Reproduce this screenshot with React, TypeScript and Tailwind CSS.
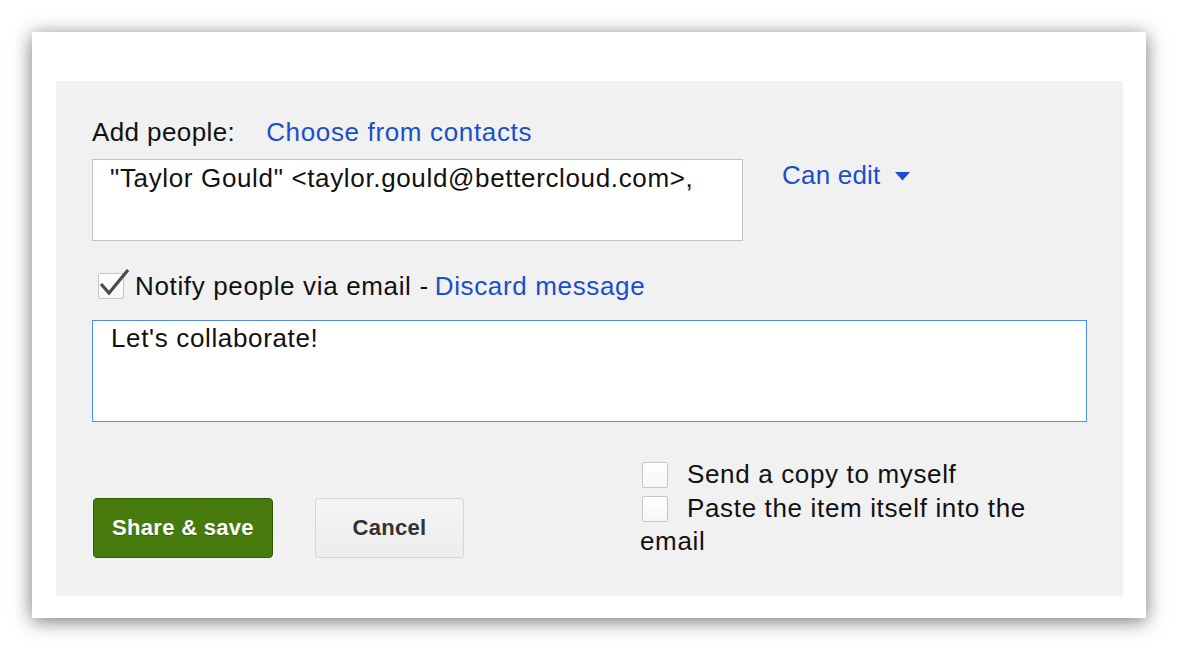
import React from "react";

function Box({ className = "" }: { className?: string }) {
  return (
    <span
      className={
        "inline-block w-[26px] h-[26px] border border-[#c6c6c6] rounded-[2px] bg-gradient-to-b from-white to-[#f6f6f6] " +
        className
      }
    />
  );
}

export default function App() {
  return (
    <div className="w-[1178px] h-[651px] bg-white pt-[32px] pl-[32px] font-['Liberation_Sans',Arial,sans-serif] text-[26px] leading-[32px] tracking-[0.65px] text-[#111]">
      <div className="w-[1114px] h-[586px] bg-white shadow-[0_3px_18px_rgba(0,0,0,0.55)] pt-[49px] pl-[24px]">
        <div className="w-[1067px] h-[515px] bg-[#f1f1f1] pl-[36px] pt-[35px]">
          <div className="flex">
            <span className="tracking-[0.4px]">Add people:</span>
            <span className="ml-[31px] text-[#1a4fcb]">Choose from contacts</span>
          </div>
          <div className="flex items-start mt-[11px]">
            <div className="w-[651px] h-[82px] bg-white border border-[#c4c4c4] pl-[17px] pt-[2px]">
              "Taylor Gould" &lt;taylor.gould@bettercloud.com&gt;,
            </div>
            <div className="ml-[39px] flex items-center text-[#1a4fcb]">
              <span className="tracking-[0.2px]">Can edit</span>
              <svg width="15" height="9" viewBox="0 0 15 9" className="ml-[15px] mt-[2px]">
                <path d="M0 0 H15 L7.5 8.5 Z" fill="#1a4fcb" />
              </svg>
            </div>
          </div>
          <div className="flex items-center mt-[29px]">
            <span className="relative ml-[6px] inline-flex">
              <Box className="w-[25px] h-[25px]" />
              <svg
                width="34"
                height="30"
                viewBox="0 0 34 30"
                className="absolute left-[0px] top-[-4px]"
              >
                <path
                  d="M3 15 L11 24 L30 1"
                  stroke="#4a4a4a"
                  strokeWidth="3.2"
                  fill="none"
                  strokeLinejoin="miter"
                />
              </svg>
            </span>
            <span className="ml-[11px]">Notify people via email - </span>
            <span className="ml-[6px] text-[#1a4fcb]">Discard message</span>
          </div>
          <div className="mt-[18px] w-[995px] h-[102px] bg-white border-[1.5px] border-[#4d8ef0] pl-[18px] pt-[1px]">
            Let's collaborate!
          </div>
          <div className="flex items-start mt-[36px]">
            <div className="flex mt-[40px] tracking-[0.3px]">
              <button className="ml-[1px] w-[180px] h-[60px] rounded-[4px] bg-[#477a0c] border border-[#335a07] text-white font-bold text-[22px] [text-shadow:0_1px_0_rgba(0,0,0,0.2)]">
                Share &amp; save
              </button>
              <button className="ml-[42px] w-[149px] h-[60px] rounded-[3px] bg-gradient-to-b from-[#f5f5f5] to-[#ededed] border border-[#d6d6d6] text-[#333] font-bold text-[22px]">
                Cancel
              </button>
            </div>
            <div className="ml-[176px] w-[400px] leading-[33.5px]">
              <div className="flex items-center">
                <Box className="ml-[2px]" />
                <span className="ml-[19px]">Send a copy to myself</span>
              </div>
              <div>
                <Box className="ml-[2px] align-[-5px]" />
                <span className="ml-[19px]">Paste the item itself into the email</span>
              </div>
            </div>
          </div>
        </div>
      </div>
    </div>
  );
}
